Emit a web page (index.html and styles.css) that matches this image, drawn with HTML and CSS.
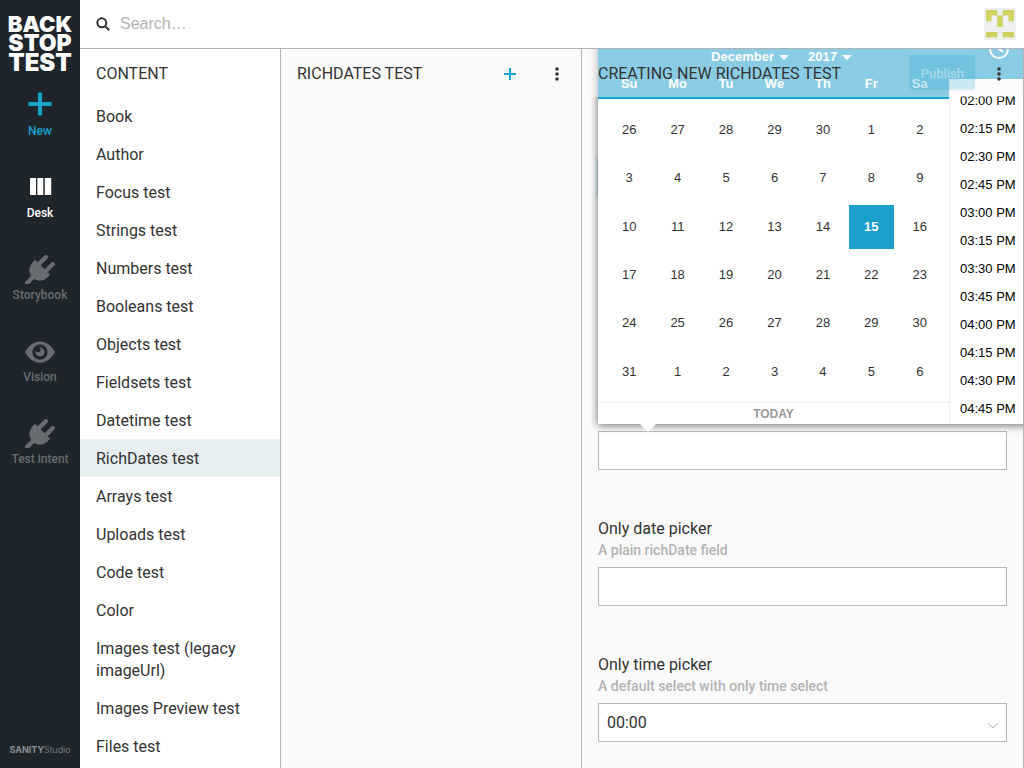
FILE: index.html
```html
<!DOCTYPE html>
<html lang="en">
<head>
<meta charset="utf-8">
<title>Backstop test</title>
<link rel="stylesheet" href="styles.css">
</head>
<body>
<svg class="defs" aria-hidden="true">
  <symbol id="plug" viewBox="0 0 1792 1792"><path d="M1755 453q37 38 37 90.5t-37 90.5l-401 400 150 150-160 160q-163 163-389.5 186.500t-411.500-100.500l-362 362h-181v-181l362-362q-124-185-100.500-411.500t186.500-389.500l160-160 150 150 400-401q38-37 91-37t90 37 37 90.500-37 90.500l-400 401 234 234 401-400q38-37 91-37t90 37z"/></symbol>
  <symbol id="dots" viewBox="0 0 16 16"><circle cx="8" cy="3" r="1.800"/><circle cx="8" cy="8" r="1.800"/><circle cx="8" cy="13" r="1.800"/></symbol>
</svg>
<div class="app">
  <nav class="sidebar">
    <a class="logo" href="#"><span class="logo-small">BACK</span><span class="logo-medium">STOP</span><span>TEST</span></a>
    <a class="tool tool-new" href="#">
      <svg viewBox="0 0 32 32"><path d="M14 4.500h4v9.500h9.500v4H18v9.500h-4V18H4.500v-4H14z"/></svg>
      <span>New</span>
    </a>
    <a class="tool tool-active" href="#">
      <svg viewBox="0 0 32 32"><path d="M6 8h6v17H6zM13.300 8h6v17h-6zM20.800 8h6.400v17h-6.400z"/></svg>
      <span>Desk</span>
    </a>
    <a class="tool" href="#">
      <svg viewBox="0 0 32 32"><use href="#plug" x="1" y="3" width="30" height="30"/></svg>
      <span>Storybook</span>
    </a>
    <a class="tool" href="#">
      <svg viewBox="0 0 32 32"><path fill-rule="evenodd" d="M1 18C4.500 12 9.500 7.500 16 7.500S27.500 12 31 18C27.500 24.500 22.500 28.800 16 28.800S4.500 24.500 1 18zM16 10.500a7.600 7.600 0 1 0 0 15.200 7.600 7.600 0 0 0 0-15.200z"/><path d="M15.500 13.600a2.600 2.600 0 1 1-3.800 3.300 4.500 4.500 0 1 0 3.800-3.300z"/></svg>
      <span>Vision</span>
    </a>
    <a class="tool" href="#">
      <svg viewBox="0 0 32 32"><use href="#plug" x="1" y="3" width="30" height="30"/></svg>
      <span>Test intent</span>
    </a>
    <div class="brand"><b>SANITY</b><span>Studio</span></div>
  </nav>
  <div class="main">
    <header class="topbar">
      <svg class="search-icon" viewBox="0 0 14 14"><circle cx="5.800" cy="5.800" r="4.500"/><path d="M9.200 9.200l4 4"/></svg>
      <input class="search" type="search" placeholder="Search…" aria-label="Search">
      <svg class="avatar" viewBox="0 0 32 32"><path class="avatar-bg" d="M0 0h32v32H0z"/><path d="M2 2h11.200v5.600H7.600v5.600H2zM18.800 2H30v11.200h-5.600V7.600h-5.600zM13.200 7.600h5.600v11.200h-5.600zM2 24h11.200v5.600H2zM18.800 24H30v5.600H18.800z"/></svg>
    </header>
    <div class="panes">
      <section class="pane pane-list">
        <div class="pane-header"><h2>CONTENT</h2></div>
        <ul class="menu">
          <li><a href="#">Book</a></li>
          <li><a href="#">Author</a></li>
          <li><a href="#">Focus test</a></li>
          <li><a href="#">Strings test</a></li>
          <li><a href="#">Numbers test</a></li>
          <li><a href="#">Booleans test</a></li>
          <li><a href="#">Objects test</a></li>
          <li><a href="#">Fieldsets test</a></li>
          <li><a href="#">Datetime test</a></li>
          <li><a class="selected" href="#">RichDates test</a></li>
          <li><a href="#">Arrays test</a></li>
          <li><a href="#">Uploads test</a></li>
          <li><a href="#">Code test</a></li>
          <li><a href="#">Color</a></li>
          <li><a href="#">Images test (legacy imageUrl)</a></li>
          <li><a href="#">Images Preview test</a></li>
          <li><a href="#">Files test</a></li>
        </ul>
      </section>
      <section class="pane pane-docs">
        <div class="pane-header">
          <h2>RICHDATES TEST</h2>
          <button class="icon-button add" type="button" aria-label="Create"><svg viewBox="0 0 16 16"><path d="M7 2h2v5h5v2H9v5H7V9H2V7h5z"/></svg></button>
          <button class="icon-button" type="button" aria-label="Menu"><svg viewBox="0 0 16 16"><use href="#dots"/></svg></button>
        </div>
      </section>
      <section class="pane pane-editor">
        <div class="pane-header editor-header">
          <h2>CREATING NEW RICHDATES TEST</h2>
          <button class="publish" type="button" disabled>Publish</button>
          <button class="icon-button" type="button" aria-label="Menu"><svg viewBox="0 0 16 16"><use href="#dots"/></svg></button>
        </div>
        <form class="form">
          <input class="control focused" type="text" aria-label="Title">
          <div class="date-field">
            <input class="control" type="text" aria-label="Date and time">
            <div class="picker">
              <div class="calendar">
                <div class="calendar-header">
                  <div class="calendar-selects">
                    <button type="button">December<i class="caret"></i></button>
                    <button type="button">2017<i class="caret"></i></button>
                  </div>
                  <div class="weekdays"><span>Su</span><span>Mo</span><span>Tu</span><span>We</span><span>Th</span><span>Fr</span><span>Sa</span></div>
                </div>
                <div class="days">
                  <button type="button">26</button><button type="button">27</button><button type="button">28</button><button type="button">29</button><button type="button">30</button><button type="button">1</button><button type="button">2</button>
                  <button type="button">3</button><button type="button">4</button><button type="button">5</button><button type="button">6</button><button type="button">7</button><button type="button">8</button><button type="button">9</button>
                  <button type="button">10</button><button type="button">11</button><button type="button">12</button><button type="button">13</button><button type="button">14</button><button class="current" type="button">15</button><button type="button">16</button>
                  <button type="button">17</button><button type="button">18</button><button type="button">19</button><button type="button">20</button><button type="button">21</button><button type="button">22</button><button type="button">23</button>
                  <button type="button">24</button><button type="button">25</button><button type="button">26</button><button type="button">27</button><button type="button">28</button><button type="button">29</button><button type="button">30</button>
                  <button type="button">31</button><button type="button">1</button><button type="button">2</button><button type="button">3</button><button type="button">4</button><button type="button">5</button><button type="button">6</button>
                </div>
                <button class="today" type="button">TODAY</button>
              </div>
              <div class="times">
                <div class="times-header"><svg viewBox="0 0 22 22"><circle cx="11" cy="11" r="9"/><path d="M11 5v6l4 3"/></svg></div>
                <ul>
                  <li><button type="button">02:00 PM</button></li>
                  <li><button type="button">02:15 PM</button></li>
                  <li><button type="button">02:30 PM</button></li>
                  <li><button type="button">02:45 PM</button></li>
                  <li><button type="button">03:00 PM</button></li>
                  <li><button type="button">03:15 PM</button></li>
                  <li><button type="button">03:30 PM</button></li>
                  <li><button type="button">03:45 PM</button></li>
                  <li><button type="button">04:00 PM</button></li>
                  <li><button type="button">04:15 PM</button></li>
                  <li><button type="button">04:30 PM</button></li>
                  <li><button type="button">04:45 PM</button></li>
                </ul>
              </div>
            </div>
          </div>
          <div class="field">
            <label for="date">Only date picker</label>
            <p id="date-hint">A plain richDate field</p>
            <input class="control" id="date" type="text" aria-describedby="date-hint">
          </div>
          <div class="field">
            <label for="time">Only time picker</label>
            <p id="time-hint">A default select with only time select</p>
            <div class="select">
              <select class="control" id="time" aria-describedby="time-hint"><option>00:00</option></select>
              <svg viewBox="0 0 12 8"><path d="M1 1l5 5 5-5"/></svg>
            </div>
          </div>
        </form>
      </section>
    </div>
  </div>
</div>
</body>
</html>
```

FILE: styles.css
```css
* {
  box-sizing: border-box;
}

body {
  margin: 0;
  font: 16px/22px Roboto, sans-serif;
  color: #333;
}

h2,
p,
ul {
  margin: 0;
  padding: 0;
}

ul {
  list-style: none;
}

a {
  color: inherit;
  text-decoration: none;
}

button {
  margin: 0;
  padding: 0;
  border: 0;
  background: none;
  color: inherit;
  font: inherit;
}

.defs {
  position: absolute;
  width: 0;
  height: 0;
}

.app {
  display: flex;
  height: 100vh;
  overflow: hidden;
}

/* Sidebar */

.sidebar {
  display: flex;
  flex: none;
  flex-direction: column;
  width: 80px;
  padding-top: 15px;
  background: #1e262c;
  color: #666c70;
}

.logo {
  display: flex;
  flex-direction: column;
  align-items: center;
  margin-bottom: 8px;
  color: #fff;
  font: 900 24px/19px Inter, sans-serif;
}

.logo-small {
  font-size: 22px;
}

.logo-medium {
  font-size: 23px;
}

.tool {
  display: flex;
  flex-direction: column;
  align-items: center;
  height: 82px;
  padding-top: 8px;
  font-size: 12px;
  font-weight: 500;
  line-height: 16px;
}

.tool svg {
  width: 32px;
  height: 32px;
  margin-bottom: 3px;
  fill: currentColor;
}

.tool-new {
  color: #1b9fcd;
}

.tool-active {
  color: #fff;
}

.brand {
  margin: auto 0 11px;
  color: #8b9195;
  font: 9px/14px Inter, sans-serif;
  text-align: center;
}

.brand span {
  font-weight: 300;
}

/* Top bar */

.main {
  display: flex;
  flex: 1;
  flex-direction: column;
  min-width: 0;
}

.topbar {
  display: flex;
  flex: none;
  align-items: center;
  height: 49px;
  padding: 0 8px 0 16px;
  border-bottom: 1px solid #b3b3b3;
  background: #fff;
}

.search-icon {
  width: 14px;
  height: 14px;
  fill: none;
  stroke: #333;
  stroke-width: 2;
}

.search {
  flex: 1;
  min-width: 0;
  margin: 0 10px;
  padding: 0;
  border: 0;
  outline: 0;
  background: none;
  font: 16px/24px "Liberation Sans", sans-serif;
}

.search::placeholder {
  color: #b3b3b3;
}

.avatar {
  width: 32px;
  height: 32px;
  fill: #cfd160;
}

.avatar-bg {
  fill: #efefef;
}

/* Panes */

.panes {
  display: flex;
  flex: 1;
  min-height: 0;
}

.pane {
  border-right: 1px solid #b3b3b3;
  background: #fafafa;
  overflow: hidden;
}

.pane-list {
  flex: none;
  width: 201px;
  background: #fff;
}

.pane-docs {
  flex: none;
  width: 301px;
}

.pane-editor {
  position: relative;
  flex: 1;
  min-width: 0;
}

.pane-header {
  display: flex;
  align-items: center;
  height: 48px;
  padding: 2px 16px 0;
}

.pane-header h2 {
  flex: 1;
  font-size: 16px;
  font-weight: 400;
  white-space: nowrap;
}

.icon-button {
  display: flex;
  width: 16px;
  height: 16px;
}

.icon-button svg {
  width: 16px;
  height: 16px;
  fill: #333;
}

.icon-button.add {
  margin-right: 31px;
}

.add svg {
  fill: #1b9fcd;
}

.menu a {
  display: block;
  padding: 9px 16px 7px;
}

.menu .selected {
  background: #e6eeef;
}

/* Editor */

.editor-header {
  position: relative;
  z-index: 2;
  background: rgba(250, 250, 250, 0.5);
}

.publish {
  height: 34px;
  margin: 0 16px 4px 0;
  padding: 3px 11px 0;
  border-radius: 2px;
  background: rgba(27, 159, 205, 0.22);
  box-shadow: 0 1px 2px rgba(27, 159, 205, 0.15);
  color: rgba(255, 255, 255, 0.4);
  font-size: 13px;
  font-weight: 500;
}

.form {
  padding: 61px 16px 0;
}

.control {
  display: block;
  width: 100%;
  height: 39px;
  margin: 0;
  padding: 0 8px;
  border: 1px solid #b8b8b8;
  border-radius: 0;
  outline: 0;
  background: #fff;
  color: #333;
  font: 16px/22px Roboto, sans-serif;
  appearance: none;
}

.focused {
  border-color: #1b9fcd;
  box-shadow: 0 0 3px rgba(27, 159, 205, 0.6);
}

.date-field {
  position: relative;
  margin-top: 234px;
}

.field {
  margin-top: 48px;
}

.field label {
  display: block;
}

.field p {
  margin-bottom: 7px;
  color: #b3b3b3;
  font-size: 14px;
  font-weight: 500;
  line-height: 20px;
}

.select {
  position: relative;
}

.select svg {
  position: absolute;
  right: 8px;
  bottom: 12px;
  width: 12px;
  height: 8px;
  fill: none;
  stroke: #b3b3b3;
}

/* Date picker */

.picker {
  position: absolute;
  bottom: calc(100% + 7px);
  left: 0;
  z-index: 1;
  display: flex;
  background: #fff;
  box-shadow: 0 1px 8px rgba(0, 0, 0, 0.6);
  font: 13px/20px "Liberation Sans", sans-serif;
}

.picker::after {
  position: absolute;
  top: 100%;
  left: 42px;
  border: 8px solid transparent;
  border-top-color: #fff;
  border-bottom: 0;
  content: "";
}

.calendar {
  display: flex;
  flex-direction: column;
  width: 351px;
}

.calendar-header {
  padding: 29px 5px 0 7px;
  border-bottom: 2px solid #1b9fcd;
  background: #1b9fcd;
  color: #fff;
  font-weight: 700;
}

.calendar-selects {
  display: flex;
  justify-content: center;
  gap: 19px;
  padding-left: 14px;
}

.calendar-selects button {
  display: flex;
  align-items: center;
  gap: 5px;
}

.caret {
  border: 5px solid transparent;
  border-top-color: #fff;
  border-bottom: 0;
}

.weekdays,
.days {
  display: grid;
  grid-template-columns: repeat(7, 1fr);
  text-align: center;
}

.weekdays {
  padding: 7px 0 3px;
}

.days {
  grid-auto-rows: 1fr;
  height: 303px;
  padding: 7px 5px 6px 7px;
}

.days button {
  margin: 2px;
}

.days .current {
  background: #1b9fcd;
  color: #fff;
  font-weight: 700;
}

.today {
  height: 22px;
  border-top: 1px solid #eee;
  color: #999;
  font-size: 12px;
  font-weight: 700;
}

.times {
  width: 86px;
  border-left: 1px solid #eee;
  color: #000;
}

.times-header {
  display: flex;
  justify-content: center;
  align-items: center;
  height: 61px;
  margin-left: -1px;
  padding-left: 13px;
  background: #1b9fcd;
}

.times-header svg {
  width: 22px;
  height: 22px;
  fill: none;
  stroke: #fff;
  stroke-width: 2;
}

.times ul {
  padding: 8px 0 0 10px;
}

.times button {
  display: block;
  line-height: 28px;
}
```
